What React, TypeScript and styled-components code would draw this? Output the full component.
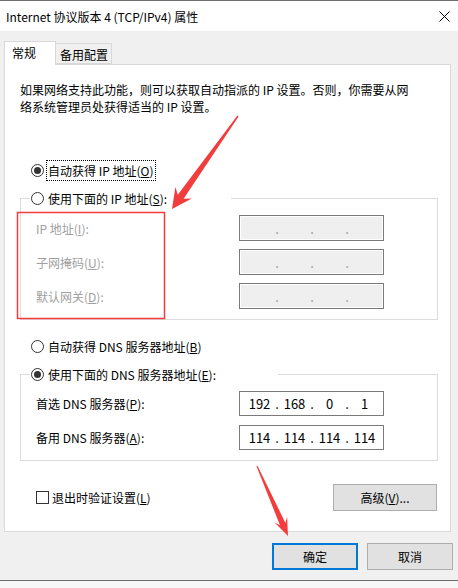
import React from 'react';
import styled, { createGlobalStyle } from 'styled-components';

const GlobalStyle = createGlobalStyle`
    html, body {
        margin: 0;
        padding: 0;
        background: #f0f0f0;
    }
    body {
        font-family: "Noto Sans CJK SC", "Noto Sans", sans-serif;
        font-size: 12px;
        color: #000;
    }
`;

const Window = styled.div`
    position: relative;
    width: 458px;
    height: 588px;
    box-sizing: border-box;
    border-top: 1px solid #6e6e6e;
    background: #f0f0f0;
    display: flex;
    flex-direction: column;
    overflow: hidden;
`;

const TitleBar = styled.div`
    height: 30px;
    background: #fff;
    display: flex;
    align-items: center;
    justify-content: space-between;
    padding: 0 8px 0 6px;
    line-height: 17px;
`;

const Body = styled.div`
    padding: 10px 0 0 4px;
`;

const TabRow = styled.div`
    display: flex;
    align-items: flex-end;
    height: 23px;
`;

const Tab = styled.div<{ $active?: boolean }>`
    position: relative;
    z-index: ${(p) => (p.$active ? 1 : 0)};
    box-sizing: border-box;
    height: ${(p) => (p.$active ? '24px' : '21px')};
    margin-bottom: ${(p) => (p.$active ? '-1px' : '0')};
    width: ${(p) => (p.$active ? '52px' : '56px')};
    padding: 2px 0 0 ${(p) => (p.$active ? '7px' : '4px')};
    line-height: 17px;
    background: ${(p) => (p.$active ? '#fff' : '#f0f0f0')};
    border: 1px solid #d9d9d9;
    border-bottom: ${(p) => (p.$active ? 'none' : '1px solid #d9d9d9')};
    border-left: ${(p) => (p.$active ? '1px solid #d9d9d9' : 'none')};
`;

const Panel = styled.div`
    box-sizing: border-box;
    width: 447px;
    height: 468px;
    background: #fff;
    border: 1px solid #d9d9d9;
    padding: 16px 12px 0 15px;
    display: flex;
    flex-direction: column;
`;

const Intro = styled.p`
    margin: 0;
    line-height: 17px;
`;

const Key = styled.u`
    text-decoration: underline;
    text-underline-offset: 1px;
`;

const RadioRow = styled.label<{ $top: number }>`
    display: flex;
    align-items: center;
    height: 20px;
    margin: ${(p) => p.$top}px 0 0 11px;
    line-height: 17px;
`;

const RadioCircle = styled.span<{ $checked?: boolean }>`
    box-sizing: border-box;
    width: 13px;
    height: 13px;
    border: 1px solid #333;
    border-radius: 50%;
    margin-right: 3px;
    display: flex;
    align-items: center;
    justify-content: center;
    background: #fff;
    &::after {
        content: '';
        width: 7px;
        height: 7px;
        border-radius: 50%;
        background: ${(p) => (p.$checked ? '#333' : 'transparent')};
    }
`;

const RadioText = styled.span<{ $focused?: boolean }>`
    padding: 1px 1px;
    outline: ${(p) => (p.$focused ? '1px dotted #000' : 'none')};
    outline-offset: 0;
`;

const GroupBox = styled.fieldset<{ $legendWidth: number }>`
    margin: 8px 0 0 0;
    padding: 7px 0 10px 9px;
    border: 1px solid #dcdcdc;
    min-width: 0;
    display: flex;
    flex-direction: column;
    gap: ${(p) => (p.$legendWidth > 220 ? '9px' : '8px')};

    & > legend {
        width: ${(p) => p.$legendWidth}px;
        padding: 0;
        margin: 0;
    }

    & > legend > label {
        margin: 0 0 0 1px;
    }
`;

const FieldRow = styled.div<{ $h: number }>`
    display: flex;
    align-items: center;
    height: ${(p) => p.$h}px;
    padding-left: 6px;
`;

const FieldLabel = styled.span<{ $disabled?: boolean }>`
    flex: 0 0 203px;
    line-height: 17px;
    color: ${(p) => (p.$disabled ? '#a0a0a0' : '#000')};
`;

const IpBox = styled.div<{ $disabled?: boolean; $h: number }>`
    box-sizing: border-box;
    width: 145px;
    height: ${(p) => p.$h}px;
    display: flex;
    align-items: center;
    padding-left: 5px;
    border: 1px solid #7a7a7a;
    background: ${(p) => (p.$disabled ? '#efefef' : '#fff')};
    box-shadow: ${(p) => (p.$disabled ? 'inset 0 0 0 1px #fff' : 'none')};
    font-size: 13px;
    line-height: 17px;
`;

const Octet = styled.span`
    width: 29px;
    text-align: center;
`;

const Dot = styled.span<{ $disabled?: boolean }>`
    width: 6px;
    text-align: center;
    color: ${(p) => (p.$disabled ? '#8a96a8' : '#000')};
`;

const BottomRow = styled.div`
    display: flex;
    align-items: center;
    justify-content: space-between;
    height: 27px;
    margin-top: 23px;
    padding: 0 1px 0 16px;
`;

const CheckLabel = styled.label`
    display: flex;
    align-items: center;
    gap: 3px;
    line-height: 17px;
`;

const CheckBox = styled.span`
    box-sizing: border-box;
    width: 13px;
    height: 13px;
    border: 1px solid #333;
    background: #fff;
`;

const Button = styled.button<{ $w: number; $primary?: boolean }>`
    box-sizing: border-box;
    width: ${(p) => p.$w}px;
    height: 27px;
    padding: 0;
    font: inherit;
    line-height: 17px;
    color: #000;
    background: #e1e1e1;
    border: ${(p) => (p.$primary ? '2px solid #0078d7' : '1px solid #adadad')};
`;

const Footer = styled.div`
    display: flex;
    justify-content: flex-end;
    gap: 9px;
    padding: 11px 5px 0 0;
`;

const BottomEdge = styled.div`
    margin-top: auto;
    height: 7px;
    border-top: 1px solid #6d6d6d;
    background: #f7f7f7;
`;

const Overlay = styled.svg`
    position: absolute;
    left: 0;
    top: 0;
    pointer-events: none;
    z-index: 10;
`;

type Ip = [string, string, string, string];

const IpField = ({ value, disabled, h }: { value?: Ip; disabled?: boolean; h: number }) => {
    const parts: Ip = value || ['', '', '', ''];
    return (
        <IpBox $disabled={disabled} $h={h}>
            {parts.map((p, i) => (
                <React.Fragment key={i}>
                    <Octet>{p}</Octet>
                    {i < 3 && <Dot $disabled={disabled}>.</Dot>}
                </React.Fragment>
            ))}
        </IpBox>
    );
};

const Radio = ({ checked, focused, top = 0, children }: { checked?: boolean; focused?: boolean; top?: number; children: React.ReactNode }) => (
    <RadioRow $top={top}>
        <RadioCircle $checked={checked} />
        <RadioText $focused={focused}>{children}</RadioText>
    </RadioRow>
);

const App = () => {
    return (
        <Window>
            <GlobalStyle />
            <TitleBar>
                <span>Internet 协议版本 4 (TCP/IPv4) 属性</span>
                <svg width="11" height="11" viewBox="0 0 11 11">
                    <path d="M0.5 0.5 L10.5 10.5 M10.5 0.5 L0.5 10.5" stroke="#000" strokeWidth="1" fill="none" />
                </svg>
            </TitleBar>
            <Body>
                <TabRow>
                    <Tab $active>常规</Tab>
                    <Tab>备用配置</Tab>
                </TabRow>
                <Panel>
                    <Intro>
                        如果网络支持此功能，则可以获取自动指派的 IP 设置。否则，你需要从网
                        <br />
                        络系统管理员处获得适当的 IP 设置。
                    </Intro>

                    <Radio checked focused top={45}>
                        自动获得 IP 地址(<Key>O</Key>)
                    </Radio>
                    <GroupBox $legendWidth={201}>
                        <legend>
                            <Radio>
                                使用下面的 IP 地址(<Key>S</Key>):
                            </Radio>
                        </legend>
                        <FieldRow $h={26}>
                            <FieldLabel $disabled>IP 地址(<Key>I</Key>):</FieldLabel>
                            <IpField disabled h={26} />
                        </FieldRow>
                        <FieldRow $h={26}>
                            <FieldLabel $disabled>子网掩码(<Key>U</Key>):</FieldLabel>
                            <IpField disabled h={26} />
                        </FieldRow>
                        <FieldRow $h={26}>
                            <FieldLabel $disabled>默认网关(<Key>D</Key>):</FieldLabel>
                            <IpField disabled h={26} />
                        </FieldRow>
                    </GroupBox>

                    <Radio top={16}>
                        自动获得 DNS 服务器地址(<Key>B</Key>)
                    </Radio>
                    <GroupBox $legendWidth={248}>
                        <legend>
                            <Radio checked>
                                使用下面的 DNS 服务器地址(<Key>E</Key>):
                            </Radio>
                        </legend>
                        <FieldRow $h={25}>
                            <FieldLabel>首选 DNS 服务器(<Key>P</Key>):</FieldLabel>
                            <IpField h={25} value={['192', '168', '0', '1']} />
                        </FieldRow>
                        <FieldRow $h={25}>
                            <FieldLabel>备用 DNS 服务器(<Key>A</Key>):</FieldLabel>
                            <IpField h={25} value={['114', '114', '114', '114']} />
                        </FieldRow>
                    </GroupBox>

                    <BottomRow>
                        <CheckLabel>
                            <CheckBox />
                            <span>退出时验证设置(<Key>L</Key>)</span>
                        </CheckLabel>
                        <Button $w={104}>
                            高级(<Key>V</Key>)...
                        </Button>
                    </BottomRow>
                </Panel>
            </Body>
            <Footer>
                <Button $w={86} $primary>确定</Button>
                <Button $w={86}>取消</Button>
            </Footer>
            <BottomEdge />

            {/* red annotations drawn over the dialog */}
            <Overlay width="458" height="588" viewBox="0 0 458 588">
                <rect x="17.5" y="211.5" width="147" height="106" fill="none" stroke="#f23d3d" strokeWidth="1.5" />
                <polygon
                    points="238.6,115.4 183.6,197.8 191.8,197.5 172,208 175.4,185.9 177.8,193.8 237.4,114.6"
                    fill="#f23d3d"
                />
                <polygon
                    points="257.5,464.8 285.4,521.9 287.1,515.7 288,535 274.3,521.3 280,524.3 256.5,465.2"
                    fill="#f23d3d"
                />
            </Overlay>
        </Window>
    );
};

export default App;
